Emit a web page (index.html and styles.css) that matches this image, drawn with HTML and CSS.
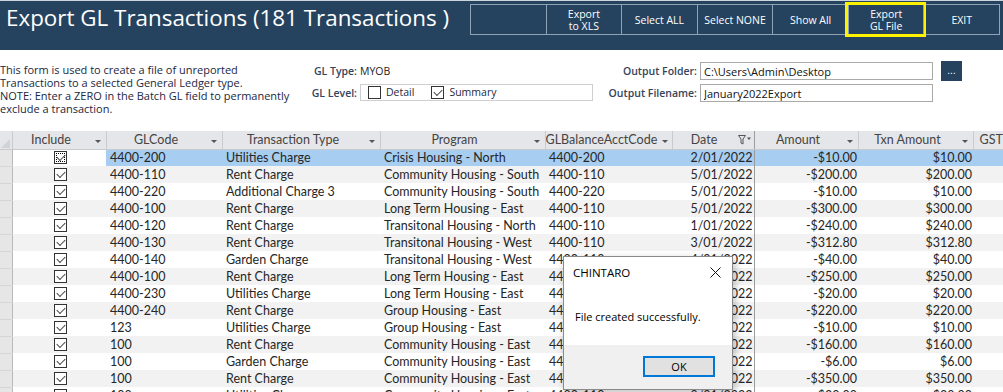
FILE: index.html
```html
<!DOCTYPE html>
<html lang="en">
<head>
    <meta charset="UTF-8">
    <title>Export GL Transactions</title>
    <link rel="stylesheet" href="styles.css">
</head>
<body>
    <div class="topbar">
        <h1 class="title">Export GL Transactions (181 Transactions )</h1>
        <div class="toolbar">
            <button class="tool"></button>
            <button class="tool">Export<br>to XLS</button>
            <button class="tool">Select ALL</button>
            <button class="tool">Select NONE</button>
            <button class="tool">Show All</button>
            <button class="tool highlight">Export<br>GL File</button>
            <button class="tool">EXIT</button>
        </div>
    </div>

    <div class="form">
        <p class="note">This form is used to create a file of unreported<br>Transactions to a selected General Ledger type.<br>NOTE: Enter a ZERO in the Batch GL field to permanently<br>exclude a transaction.</p>

        <label class="label">GL Type:</label>
        <div class="value">MYOB</div>
        <label class="label">Output Folder:</label>
        <div class="field"><input class="input" value="C:\Users\Admin\Desktop"></div>
        <button class="browse">...</button>

        <label class="label">GL Level:</label>
        <div class="value">
            <div class="level">
                <span class="box"></span> Detail
                <span class="box checked"></span> Summary
            </div>
        </div>
        <label class="label">Output Filename:</label>
        <div class="field"><input class="input" value="January2022Export"></div>
    </div>

    <table class="grid">
        <colgroup>
            <col style="width:12px"><col style="width:94px"><col style="width:116px"><col style="width:158px">
            <col style="width:165px"><col style="width:127px"><col style="width:82px"><col style="width:104px">
            <col style="width:115px"><col style="width:30px">
        </colgroup>
        <thead>
            <tr>
                <th class="sel corner"><svg width="11" height="11" viewBox="0 0 11 11"><path d="M10 1V10H1Z" fill="#cfd2d6"/></svg></th>
                <th><div class="hd"><span class="lbl">Include</span><span class="arrow"></span></div></th>
                <th><div class="hd"><span class="lbl">GLCode</span><span class="arrow"></span></div></th>
                <th><div class="hd"><span class="lbl">Transaction Type</span><span class="arrow"></span></div></th>
                <th><div class="hd"><span class="lbl">Program</span><span class="arrow"></span></div></th>
                <th><div class="hd"><span class="lbl">GLBalanceAcctCode</span><span class="arrow"></span></div></th>
                <th class="split"><div class="hd"><span class="lbl">Date</span>
                    <svg class="filter" width="14" height="10" viewBox="0 0 14 10"><path d="M0.5 0.5H7.5L5 4V9L3 8V4Z" fill="none" stroke="#555"/><path d="M9 2.5H13L11 5Z" fill="#555"/></svg>
                </div></th>
                <th><div class="hd"><span class="lbl">Amount</span><span class="arrow"></span></div></th>
                <th><div class="hd"><span class="lbl">Txn Amount</span><span class="arrow"></span></div></th>
                <th><div class="hd gst"><span>GST</span></div></th>
            </tr>
        </thead>
        <tbody>
            <tr class="current">
                <td class="sel"></td><td class="inc"><span class="box checked focus"></span></td>
                <td>4400-200</td><td>Utilities Charge</td><td>Crisis Housing - North</td><td>4400-200</td>
                <td class="num split">2/01/2022</td><td class="num">-$10.00</td><td class="num">$10.00</td><td></td>
            </tr>
            <tr>
                <td class="sel"></td><td class="inc"><span class="box checked"></span></td>
                <td>4400-110</td><td>Rent Charge</td><td>Community Housing - South</td><td>4400-110</td>
                <td class="num split">5/01/2022</td><td class="num">-$200.00</td><td class="num">$200.00</td><td></td>
            </tr>
            <tr>
                <td class="sel"></td><td class="inc"><span class="box checked"></span></td>
                <td>4400-220</td><td>Additional Charge 3</td><td>Community Housing - South</td><td>4400-220</td>
                <td class="num split">5/01/2022</td><td class="num">-$10.00</td><td class="num">$10.00</td><td></td>
            </tr>
            <tr>
                <td class="sel"></td><td class="inc"><span class="box checked"></span></td>
                <td>4400-100</td><td>Rent Charge</td><td>Long Term Housing - East</td><td>4400-110</td>
                <td class="num split">5/01/2022</td><td class="num">-$300.00</td><td class="num">$300.00</td><td></td>
            </tr>
            <tr>
                <td class="sel"></td><td class="inc"><span class="box checked"></span></td>
                <td>4400-120</td><td>Rent Charge</td><td>Transitonal Housing - North</td><td>4400-110</td>
                <td class="num split">1/01/2022</td><td class="num">-$240.00</td><td class="num">$240.00</td><td></td>
            </tr>
            <tr>
                <td class="sel"></td><td class="inc"><span class="box checked"></span></td>
                <td>4400-130</td><td>Rent Charge</td><td>Transitonal Housing - West</td><td>4400-110</td>
                <td class="num split">3/01/2022</td><td class="num">-$312.80</td><td class="num">$312.80</td><td></td>
            </tr>
            <tr>
                <td class="sel"></td><td class="inc"><span class="box checked"></span></td>
                <td>4400-140</td><td>Garden Charge</td><td>Transitonal Housing - West</td><td>4400-110</td>
                <td class="num split">4/01/2022</td><td class="num">-$40.00</td><td class="num">$40.00</td><td></td>
            </tr>
            <tr>
                <td class="sel"></td><td class="inc"><span class="box checked"></span></td>
                <td>4400-100</td><td>Rent Charge</td><td>Long Term Housing - East</td><td>4400-110</td>
                <td class="num split">6/01/2022</td><td class="num">-$250.00</td><td class="num">$250.00</td><td></td>
            </tr>
            <tr>
                <td class="sel"></td><td class="inc"><span class="box checked"></span></td>
                <td>4400-230</td><td>Utilities Charge</td><td>Long Term Housing - East</td><td>4400-230</td>
                <td class="num split">6/01/2022</td><td class="num">-$20.00</td><td class="num">$20.00</td><td></td>
            </tr>
            <tr>
                <td class="sel"></td><td class="inc"><span class="box checked"></span></td>
                <td>4400-240</td><td>Rent Charge</td><td>Group Housing - East</td><td>4400-240</td>
                <td class="num split">7/01/2022</td><td class="num">-$220.00</td><td class="num">$220.00</td><td></td>
            </tr>
            <tr>
                <td class="sel"></td><td class="inc"><span class="box checked"></span></td>
                <td>123</td><td>Utilities Charge</td><td>Group Housing - East</td><td>4400-110</td>
                <td class="num split">7/01/2022</td><td class="num">-$10.00</td><td class="num">$10.00</td><td></td>
            </tr>
            <tr>
                <td class="sel"></td><td class="inc"><span class="box checked"></span></td>
                <td>100</td><td>Rent Charge</td><td>Community Housing - East</td><td>4400-110</td>
                <td class="num split">8/01/2022</td><td class="num">-$160.00</td><td class="num">$160.00</td><td></td>
            </tr>
            <tr>
                <td class="sel"></td><td class="inc"><span class="box checked"></span></td>
                <td>100</td><td>Garden Charge</td><td>Community Housing - East</td><td>4400-110</td>
                <td class="num split">8/01/2022</td><td class="num">-$6.00</td><td class="num">$6.00</td><td></td>
            </tr>
            <tr>
                <td class="sel"></td><td class="inc"><span class="box checked"></span></td>
                <td>100</td><td>Rent Charge</td><td>Community Housing - East</td><td>4400-110</td>
                <td class="num split">9/01/2022</td><td class="num">-$350.00</td><td class="num">$350.00</td><td></td>
            </tr>
            <tr>
                <td class="sel"></td><td class="inc"><span class="box checked"></span></td>
                <td>100</td><td>Utilities Charge</td><td>Community Housing - East</td><td>4400-110</td>
                <td class="num split">9/01/2022</td><td class="num">-$20.00</td><td class="num">$20.00</td><td></td>
            </tr>
        </tbody>
    </table>

    <div class="dialog">
        <div class="dialog-head">
            <span>CHINTARO</span>
            <svg width="11" height="11" viewBox="0 0 11 11"><path d="M0.5 0.5L10.5 10.5M10.5 0.5L0.5 10.5" stroke="#111" stroke-width="1"/></svg>
        </div>
        <div class="dialog-body">File created successfully.</div>
        <div class="dialog-foot"><button class="ok">OK</button></div>
    </div>
</body>
</html>
```

FILE: styles.css
```css
* {
    margin: 0;
    padding: 0;
    box-sizing: border-box;
}
body {
    width: 1003px;
    height: 392px;
    overflow: hidden;
    position: relative;
    background: #fff;
    font-family: 'Open Sans', sans-serif;
}

/* header */
.topbar {
    height: 50px;
    background: #25435f;
    border-top: 1px solid #cdd5dc;
    display: flex;
    align-items: flex-start;
}
.title {
    color: #fff;
    font-weight: 400;
    font-size: 22.4px;
    line-height: 28px;
    padding: 3px 0 0 6px;
    white-space: nowrap;
}
.toolbar {
    display: flex;
    width: 530px;
    height: 31px;
    margin: 3px 3px 0 auto;
    border: 1px solid #8fa3b6;
}
.tool {
    flex: 1;
    background: none;
    border: none;
    border-left: 1px solid #8fa3b6;
    color: #fff;
    font-family: 'Open Sans', sans-serif;
    font-size: 10.5px;
    line-height: 12px;
}
.tool:first-child {
    border-left: none;
}
.tool.highlight {
    outline: 3px solid #fff200;
    outline-offset: 0;
}

/* form */
.form {
    height: 81px;
    padding-top: 11px;
    display: grid;
    grid-template-columns: 305px 55px 240px 100px 241px 21px;
    grid-template-rows: 22px 22px;
    color: #1d2a40;
    font-size: 10.5px;
}
.note {
    grid-row: 1 / span 2;
    font-size: 11px;
    line-height: 13px;
    padding-top: 2px;
    white-space: nowrap;
    color: #1b2740;
}
.label {
    text-align: right;
    padding-right: 3px;
    font-weight: 600;
    color: #34445a;
    line-height: 20px;
}
.value {
    line-height: 20px;
    color: #222;
}
.level {
    width: 233px;
    height: 17px;
    margin-top: 1px;
    border: 1px solid #cfcfcf;
    display: flex;
    align-items: center;
    gap: 5px;
    padding-left: 7px;
    line-height: 15px;
    color: #1d2a40;
}
.level .box:nth-child(2) {
    margin-left: 12px;
}
.field {
    padding-top: 1px;
}
.input {
    width: 233px;
    height: 18px;
    border: 1px solid #a9a9a9;
    padding-left: 3px;
    font-family: 'Open Sans', sans-serif;
    font-size: 11px;
    color: #111;
    outline: none;
}
.browse {
    width: 21px;
    height: 20px;
    background: #25435f;
    color: #fff;
    border: none;
    font-size: 10px;
    line-height: 14px;
}

/* checkbox */
.box {
    display: inline-block;
    position: relative;
    width: 13px;
    height: 13px;
    border: 1px solid #333;
    background: #fff;
    flex: none;
}
.box.checked::after {
    content: '';
    position: absolute;
    left: 2px;
    top: 2px;
    width: 7px;
    height: 4px;
    border-left: 1px solid #444;
    border-bottom: 1px solid #444;
    transform: rotate(-45deg);
}
.box.focus {
    outline: 1px dotted #000;
    outline-offset: -3px;
}

/* datasheet */
.grid {
    width: 1003px;
    table-layout: fixed;
    border-collapse: collapse;
    font-family: 'Lato', sans-serif;
    font-size: 12.5px;
    color: #262626;
}
.grid th {
    height: 18px;
    background: #e4e6e9;
    border-right: 1px solid #c8cacd;
    border-bottom: 1px solid #c8cacd;
    font-weight: 400;
    color: #444;
    padding: 0;
    overflow: hidden;
}
.hd {
    display: flex;
    align-items: center;
    height: 17px;
}
.hd .lbl {
    flex: 1;
    text-align: center;
    white-space: nowrap;
}
.hd.gst {
    padding-left: 6px;
}
.arrow {
    width: 16px;
    height: 17px;
    position: relative;
}
.arrow::after {
    content: '';
    position: absolute;
    left: 5px;
    top: 9px;
    border-left: 3px solid transparent;
    border-right: 3px solid transparent;
    border-top: 3px solid #555;
}
.filter {
    margin: 0 2px 0 2px;
}
.corner {
    text-align: right;
    vertical-align: bottom;
}
.corner svg {
    display: block;
}
.grid td {
    height: 17px;
    padding: 0 4px;
    white-space: nowrap;
    overflow: hidden;
    line-height: 16px;
}
.grid tbody tr:nth-child(even) td {
    background: #f2f2f2;
}
.grid tr.current td {
    background: #a7cdf0;
}
.grid td.sel,
.grid tr.current td.sel,
.grid tbody tr:nth-child(even) td.sel {
    background: #e6e6e6;
    border-right: 1px solid #b9b9b9;
    border-bottom: 1px solid #d6d6d6;
    padding: 0;
}
.grid td.inc {
    text-align: center;
    padding: 0 0 0 3px;
}
.grid tr.current td.inc {
    background: #fff;
}
.grid td.inc .box {
    vertical-align: middle;
    margin-top: -2px;
}
.grid td.num {
    text-align: right;
    padding-right: 1px;
}
.grid .split {
    border-right: 1px solid #9c9c9c;
}

/* message box */
.dialog {
    position: absolute;
    left: 563px;
    top: 256px;
    width: 170px;
    height: 134px;
    background: #fff;
    border: 1px solid #8a8a8a;
    box-shadow: 2px 3px 8px rgba(0,0,0,0.25);
    display: flex;
    flex-direction: column;
    font-family: 'Open Sans', sans-serif;
    color: #000;
    font-size: 11px;
}
.dialog-head {
    height: 30px;
    display: flex;
    align-items: center;
    justify-content: space-between;
    padding: 0 11px 0 9px;
    font-size: 11.5px;
}
.dialog-body {
    flex: 1;
    padding: 22px 0 0 11px;
}
.dialog-foot {
    height: 44px;
    background: #f0f0f0;
    display: flex;
    justify-content: flex-end;
    padding: 11px 17px 0 0;
}
.ok {
    width: 72px;
    height: 21px;
    background: #e1e1e1;
    border: 2px solid #0078d7;
    font-family: 'Open Sans', sans-serif;
    font-size: 11px;
    color: #000;
}
```
